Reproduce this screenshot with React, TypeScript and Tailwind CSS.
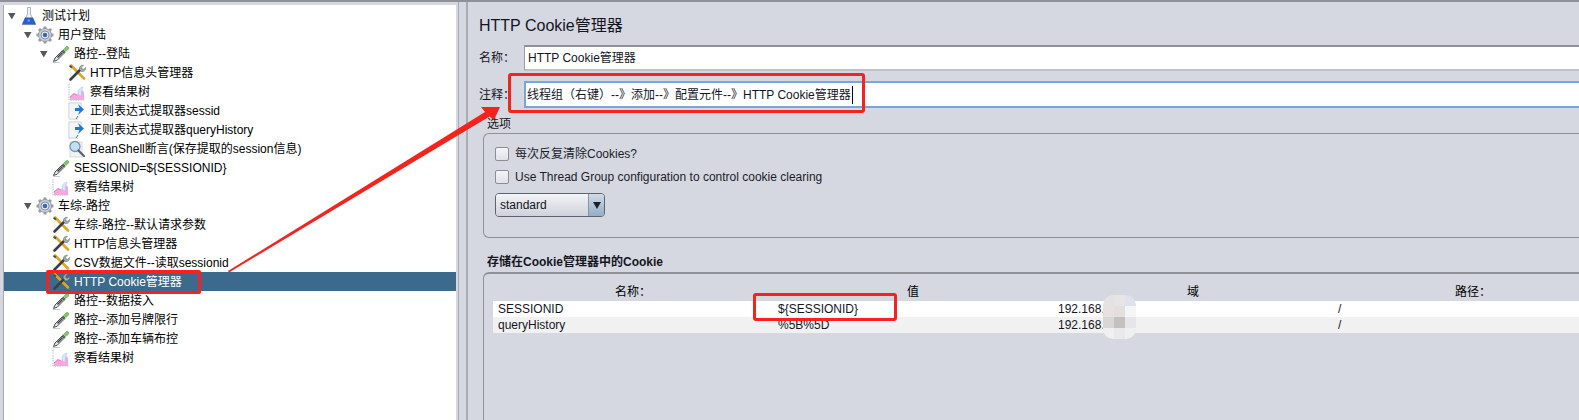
import type { ReactNode } from "react";

const Triangle = () => (
  <svg width="8" height="8" viewBox="0 0 8 8">
    <path d="M0 1h7.5L3.8 7.5z" fill="#55585e" />
  </svg>
);

const Flask = () => (
  <svg width="18" height="18" viewBox="0 0 18 18">
    <path d="M7.500 0.500h3v6.500l5 10.500H2.500l5-10.500z" fill="#eef1f6" stroke="#9aa3b2" strokeWidth="0.8" />
    <path d="M5 10.500h8l3 7H2z" fill="#2a5fc8" />
    <circle cx="8.800" cy="13.500" r="1.300" fill="#6f9cf0" />
  </svg>
);

const Gear = () => (
  <svg width="18" height="18" viewBox="0 0 18 18">
    <g stroke="#9a9ea6" strokeWidth="3">
      <path d="M9 0.500v17M0.500 9h17M3 3l12 12M15 3L3 15" />
    </g>
    <circle cx="9" cy="9" r="6.500" fill="#c9ccd3" stroke="#8b8f98" strokeWidth="0.8" />
    <circle cx="9" cy="9" r="4" fill="#e9eef7" stroke="#5f7fb8" strokeWidth="0.8" />
    <circle cx="9" cy="9" r="2.300" fill="#3767b8" />
  </svg>
);

const Dropper = () => (
  <svg width="18" height="18" viewBox="0 0 18 18">
    <path d="M1.500 16.500L3 13l7-7 2.200 2.200-7 7z" fill="#dfe3e6" stroke="#4b4f55" strokeWidth="1" />
    <path d="M5 12l5-5 1 1-5 5z" fill="#3a3d42" />
    <path d="M10 5.500l1.200-1.200 2.700 2.700-1.200 1.200z" fill="#3f7f3a" />
    <path d="M12 4.200l2-2.400a1.700 1.700 0 0 1 2.400 2.400L14 6.200z" fill="#86c36f" stroke="#5a9a4a" strokeWidth="0.5" />
    <path d="M1 17.500h7" stroke="#b9bcc2" strokeWidth="0.8" />
  </svg>
);

const Tools = () => (
  <svg width="18" height="18" viewBox="0 0 18 18">
    <path d="M3 1.500L16 14.500" stroke="#e2a51f" strokeWidth="2.600" strokeLinecap="round" />
    <path d="M2 1l2.500 1.500L3.500 4.500 1 2.500z" fill="#4b4f55" />
    <path d="M13 5L2.500 15.500" stroke="#3b3e44" strokeWidth="2.600" strokeLinecap="round" />
    <path d="M11.500 5.500a3.400 3.400 0 0 1 4-4.300l-2 2.100.5 1.600 1.700.4 1.800-1.800a3.400 3.400 0 0 1-4.300 4z" fill="#a7abb2" stroke="#6a6e75" strokeWidth="0.5" />
  </svg>
);

const Graph = () => (
  <svg width="18" height="18" viewBox="0 0 18 18">
    <path d="M1 1v16h16" fill="none" stroke="#b8bbc2" strokeWidth="1" strokeDasharray="1.500 1" />
    <path d="M2 17v-3l4-3.500 3 1.500 2-4 3-1 2 2v8z" fill="#f3a9dd" />
    <path d="M2 14l4-3.500 3 1.500" fill="none" stroke="#d65fb4" strokeWidth="0.8" />
    <path d="M10 9.500c0-3 2-5 5-5.500-1 3-2 6-1.500 9-2 0-3.500-1-3.500-3.500z" fill="#d7e6fb" stroke="#a9bfe0" strokeWidth="0.5" />
  </svg>
);

const Regex = () => (
  <svg width="18" height="18" viewBox="0 0 18 18">
    <path d="M1 1h12v6M1 1v16h9" fill="#f4f5f7" stroke="#c3c6cc" strokeWidth="1" />
    <rect x="1.500" y="1.500" width="11" height="15" fill="#f4f5f7" />
    <path d="M10 2l6 5.500-6 5.500 1.500-4H7V6h4.500z" fill="#1f78d8" />
    <path d="M8 17l2-3" stroke="#6a6e75" strokeWidth="1" />
  </svg>
);

const Lens = () => (
  <svg width="18" height="18" viewBox="0 0 18 18">
    <rect x="2" y="2" width="12" height="15" fill="#f1f2f5" stroke="#d3d5da" strokeWidth="0.8" />
    <circle cx="7" cy="6.500" r="5" fill="#bfe0f7" stroke="#7d95ad" strokeWidth="1.300" />
    <path d="M10.500 10.500L16 16" stroke="#5c6068" strokeWidth="2.200" strokeLinecap="round" />
  </svg>
);

type Row = { text: ReactNode; icon: ReactNode; depth: 0 | 1 | 2 | 3; open?: boolean; selected?: boolean };

const depthClass = ["pl-[4px]", "pl-[20px]", "pl-[36px]", "pl-[52px]"];

const rows: Row[] = [
  { text: "测试计划", icon: <Flask />, depth: 0, open: true },
  { text: "用户登陆", icon: <Gear />, depth: 1, open: true },
  { text: "路控--登陆", icon: <Dropper />, depth: 2, open: true },
  { text: "HTTP信息头管理器", icon: <Tools />, depth: 3 },
  { text: "察看结果树", icon: <Graph />, depth: 3 },
  { text: "正则表达式提取器sessid", icon: <Regex />, depth: 3 },
  { text: "正则表达式提取器queryHistory", icon: <Regex />, depth: 3 },
  { text: "BeanShell断言(保存提取的session信息)", icon: <Lens />, depth: 3 },
  { text: "SESSIONID=${SESSIONID}", icon: <Dropper />, depth: 2 },
  { text: "察看结果树", icon: <Graph />, depth: 2 },
  { text: "车综-路控", icon: <Gear />, depth: 1, open: true },
  { text: "车综-路控--默认请求参数", icon: <Tools />, depth: 2 },
  { text: "HTTP信息头管理器", icon: <Tools />, depth: 2 },
  { text: "CSV数据文件--读取sessionid", icon: <Tools />, depth: 2 },
  { text: "HTTP Cookie管理器", icon: <Tools />, depth: 2, selected: true },
  { text: "路控--数据接入", icon: <Dropper />, depth: 2 },
  { text: "路控--添加号牌限行", icon: <Dropper />, depth: 2 },
  { text: "路控--添加车辆布控", icon: <Dropper />, depth: 2 },
  { text: "察看结果树", icon: <Graph />, depth: 2 },
];

const TreeRow = ({ row }: { row: Row }) => (
  <div
    className={`flex h-[19px] items-center whitespace-nowrap ${depthClass[row.depth]} ${
      row.selected ? "bg-[#3c6a8c] text-white" : "text-black"
    }`}
  >
    <span className="flex w-[12px] shrink-0 items-center">{row.open && <Triangle />}</span>
    <span className="mr-[4px] flex h-[18px] w-[18px] shrink-0">{row.icon}</span>
    <span>{row.text}</span>
  </div>
);

const Checkbox = ({ label }: { label: string }) => (
  <div className="flex h-[14px] items-center gap-[6px]">
    <span className="h-[14px] w-[14px] rounded-[2px] border border-[#8b8e96] bg-gradient-to-b from-[#f4f5f8] to-[#dfe2e8]" />
    <span className="text-[#1c1c2a]">{label}</span>
  </div>
);

const blurTiles = [
  "bg-[#e4e2e2]", "bg-[#e6e4e4]", "bg-[#dfe2ea]",
  "bg-[#e5e2e1]", "bg-[#e2dfde]", "bg-[#f4f5f6]",
  "bg-[#d9d6d6]", "bg-[#c4c0c0]", "bg-[#e6e6e9]",
  "bg-[#eff0f1]", "bg-[#e9e9eb]", "bg-[#eeeff0]",
];

export default function App() {
  return (
    <div className="relative flex h-[420px] w-[1579px] overflow-hidden border-t-2 border-[#8f9098] bg-[#d5d8e0] font-['Liberation_Sans','Noto_Sans_CJK_SC',sans-serif] text-[12px] leading-[16px]">
      <div className="mt-[3px] ml-[3px] w-[453px] shrink-0 border-l border-[#a6a8ae] bg-white pt-px">
        {rows.map((row, i) => (
          <TreeRow key={i} row={row} />
        ))}
      </div>

      <div className="ml-[2px] w-[9px] shrink-0 border-x border-[#a9abb2]" />

      <div className="min-w-0 flex-1 border-l border-[#a9abb2] pl-[11px] text-[#15151f]">
        <div className="mt-[14px] h-[20px] text-[16px] leading-[20px]">HTTP Cookie管理器</div>

        <div className="mt-[9px] flex h-[26px] items-center">
          <span className="w-[45px] shrink-0">名称：</span>
          <div className="flex h-full flex-1 items-center border-y-2 border-l border-y-[#c0c1c6] border-t-[#8f9098] border-l-[#9a9ca3] bg-white pl-[3px]">
            HTTP Cookie管理器
          </div>
        </div>

        <div className="mt-[10px] flex h-[27px] items-center">
          <span className="w-[45px] shrink-0">注释：</span>
          <div className="flex h-full flex-1 items-center border-y-2 border-l-2 border-[#78a6d8] bg-white pl-[1px]">
            线程组（右键）--》添加--》配置元件--》HTTP Cookie管理器
            <span className="ml-px h-[18px] w-px bg-black" />
          </div>
        </div>

        <div className="mt-[8px] pl-[8px] leading-[16px]">选项</div>
        <div className="mt-[1px] ml-[4px] h-[105px] rounded-l-[6px] border-y border-l border-[#8f9198] pt-[13px] pl-[11px]">
          <Checkbox label="每次反复清除Cookies?" />
          <div className="mt-[9px]">
            <Checkbox label="Use Thread Group configuration to control cookie clearing" />
          </div>
          <div className="mt-[9px] flex h-[24px] w-[110px] overflow-hidden rounded-[4px] border border-[#5d6470]">
            <span className="flex flex-1 items-center bg-gradient-to-b from-[#f3f4f7] to-[#cfd2da] pl-[4px]">standard</span>
            <span className="flex w-[16px] items-center justify-center border-l border-[#8a93a0] bg-gradient-to-b from-[#cfdbe7] to-[#93aec6]">
              <svg width="8" height="7" viewBox="0 0 8 7">
                <path d="M0 0h8L4 7z" fill="#1d1f24" />
              </svg>
            </span>
          </div>
        </div>

        <div className="mt-[16px] pl-[8px] font-bold leading-[16px]">存储在Cookie管理器中的Cookie</div>
        <div className="mt-[2px] ml-[4px] h-[160px] rounded-tl-[6px] border-t-2 border-l border-[#8f9198] pl-[9px]">
          <div className="grid h-[27px] w-[1120px] grid-cols-4 pt-[10px] text-center text-black">
            <span>名称：</span>
            <span>值</span>
            <span>域</span>
            <span>路径：</span>
          </div>
          <div className="grid h-[16px] w-[1120px] grid-cols-4 items-center bg-white">
            <span className="pl-[5px]">SESSIONID</span>
            <span className="pl-[5px]">{"${SESSIONID}"}</span>
            <span className="pl-[5px]">192.168.</span>
            <span className="pl-[5px]">/</span>
          </div>
          <div className="grid h-[16px] w-[1120px] grid-cols-4 items-center bg-[#f1f1f2]">
            <span className="pl-[5px]">queryHistory</span>
            <span className="pl-[5px]">%5B%5D</span>
            <span className="pl-[5px]">192.168.</span>
            <span className="pl-[5px]">/</span>
          </div>
        </div>
      </div>

      {/* pixelated patch hiding the ip */}
      <div className="absolute top-[293px] left-[1103px] grid w-[33px] grid-cols-3 overflow-hidden rounded-[10px]">
        {blurTiles.map((c, i) => (
          <span key={i} className={`h-[11px] ${c}`} />
        ))}
      </div>

      {/* red annotations */}
      <div className="absolute top-[268px] left-[46px] h-[24px] w-[155px] rounded-[2px] border-[3px] border-[#f5231b]" />
      <div className="absolute top-[71px] left-[508px] h-[40px] w-[357px] rounded-[3px] border-[3px] border-[#f5231b]" />
      <div className="absolute top-[291px] left-[753px] h-[28px] w-[144px] rounded-[3px] border-[3px] border-[#f5231b]" />
      <svg className="pointer-events-none absolute -top-[2px] left-0" width="1579" height="420">
        <path d="M228 271L485 112 481 107H500L494 120 489.500 116.500 229 272.500z" fill="#f5231b" />
      </svg>
    </div>
  );
}
